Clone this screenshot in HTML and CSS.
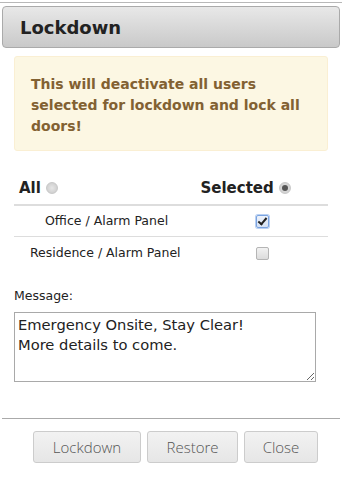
FILE: index.html
```html
<!DOCTYPE html>
<html lang="en">
<head>
    <meta charset="UTF-8">
    <meta name="viewport" content="width=device-width, initial-scale=1.0">
    <title>Lockdown</title>
    <link rel="stylesheet" href="styles.css">
</head>
<body>

<div class="dialog">
    <div class="dialog-title">Lockdown</div>

    <div class="dialog-body">
        <div class="warning">This will deactivate all users selected for lockdown and lock all doors!</div>

        <div class="choose">
            <label class="choose-all">All <span class="radio"></span></label>
            <label class="choose-selected">Selected <span class="radio on"></span></label>
        </div>

        <table class="panels">
            <tr>
                <td class="panel-name indent">Office / Alarm Panel</td>
                <td class="panel-check"><span class="check on"></span></td>
            </tr>
            <tr>
                <td class="panel-name">Residence / Alarm Panel</td>
                <td class="panel-check"><span class="check"></span></td>
            </tr>
        </table>

        <label class="msg-label" for="msg">Message:</label>
        <textarea id="msg" class="msg">Emergency Onsite, Stay Clear!
More details to come.</textarea>
    </div>

    <div class="dialog-buttons">
        <button class="btn btn-lock">Lockdown</button>
        <button class="btn btn-restore">Restore</button>
        <button class="btn btn-close">Close</button>
    </div>
</div>

</body>
</html>
```

FILE: styles.css
```css
/* 基本样式 */
body {
    margin: 0;
    background-color: #fff;
    font-family: "DejaVu Sans", Verdana, sans-serif;
}
.dialog {
    border-top: 1px solid #b8b8b8;
    margin-top: 2px;
    padding: 3px 2px 0 2px;
    height: 480px;
    box-sizing: border-box;
}
.dialog-title {
    height: 40px;
    line-height: 42px;
    padding-left: 17px;
    border: 1px solid #aaa;
    border-radius: 4px;
    background: linear-gradient(#e8e8e8, #c9c9c9);
    font-size: 18px;
    font-weight: bold;
    color: #222;
}
.dialog-body {
    padding: 8px 12px 0 12px;
}
/* 警告框 */
.warning {
    background-color: #fcf7e3;
    border: 1px solid #faefd3;
    border-radius: 3px;
    padding: 17px 16px 8px 16px;
    color: #826132;
    font-size: 14px;
    font-weight: bold;
    line-height: 21px;
    height: 68px;
}
/* 全部 / 选中 */
.choose {
    display: flex;
    justify-content: space-between;
    align-items: center;
    margin-top: 27px;
    padding: 0 37px 0 5px;
    height: 19px;
    font-size: 15px;
    font-weight: bold;
    color: #222;
}
.radio {
    display: inline-block;
    width: 10px;
    height: 10px;
    border: 1px solid #c8c8c8;
    border-radius: 50%;
    background: radial-gradient(#e6e6e6, #c8c8c8);
    vertical-align: -1px;
    position: relative;
}
.radio.on::after {
    content: "";
    position: absolute;
    left: 2px;
    top: 2px;
    width: 6px;
    height: 6px;
    border-radius: 50%;
    background-color: #555;
}
.panels {
    width: 100%;
    border-collapse: collapse;
    margin-top: 7px;
    border-top: 2px solid #ddd;
    font-size: 12.5px;
    color: #222;
}
.panels td {
    height: 30px;
    padding: 0;
}
.panels tr:first-child td {
    height: 28px;
    padding-bottom: 2px;
}
.panels tr + tr td {
    border-top: 1px solid #ddd;
}
.panel-name {
    padding-left: 16px !important;
}
.panel-name.indent {
    padding-left: 31px !important;
}
.panel-check {
    width: 72px;
    text-align: left;
}
.check {
    display: inline-block;
    width: 11px;
    height: 11px;
    border: 1px solid #b5b5b5;
    border-radius: 2px;
    background: linear-gradient(#f2f2f2, #dcdcdc);
    vertical-align: middle;
    position: relative;
}
.check.on {
    border-color: #7aa3e0;
    box-shadow: 0 0 0 1px #b9d0f2;
    background: linear-gradient(#eef3fb, #d5e1f3);
}
.check.on::after {
    content: "";
    position: absolute;
    left: 3px;
    top: 0;
    width: 3px;
    height: 7px;
    border: solid #222;
    border-width: 0 2px 2px 0;
    transform: rotate(40deg);
}
/* 消息 */
.msg-label {
    display: block;
    margin-top: 21px;
    font-size: 12.5px;
    color: #222;
}
.msg {
    display: block;
    margin-top: 9px;
    width: 302px;
    height: 70px;
    box-sizing: border-box;
    border: 1px solid #a9a9a9;
    padding: 2px 3px;
    font-family: "DejaVu Sans", Verdana, sans-serif;
    font-size: 14.7px;
    line-height: 20px;
    color: #222;
    resize: vertical;
}
/* 按钮 */
.dialog-buttons {
    margin-top: 36px;
    border-top: 1px solid #aaa;
    padding-top: 12px;
    padding-left: 31px;
    display: flex;
    gap: 6px;
}
.btn {
    height: 32px;
    border: 1px solid #ccc;
    border-radius: 3px;
    background: linear-gradient(#f2f2f2, #e6e6e6);
    font-family: "Open Sans", sans-serif;
    font-weight: 300;
    font-size: 15px;
    color: #555;
    padding: 0;
}
.btn-lock { width: 108px; }
.btn-restore { width: 91px; }
.btn-close { width: 74px; }
```
